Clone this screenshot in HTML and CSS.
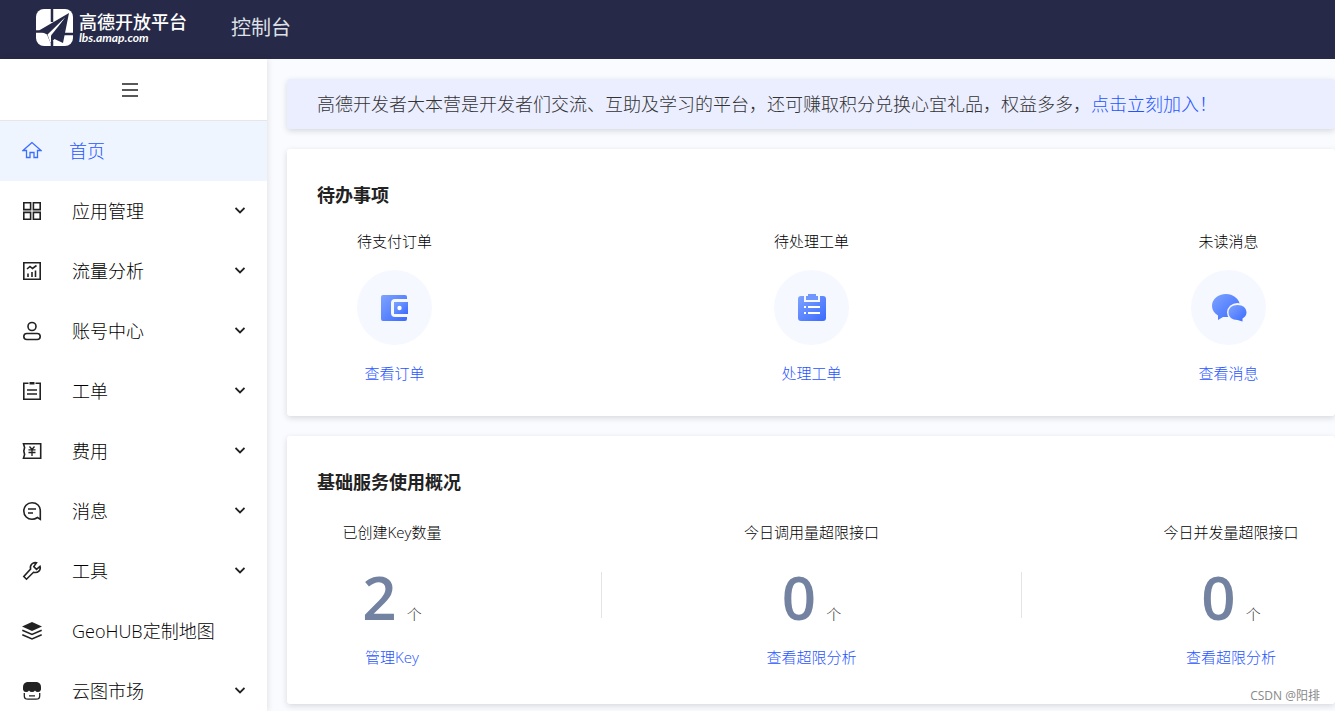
FILE: index.html
```html
<!DOCTYPE html>
<html lang="zh-CN">
<head>
<meta charset="utf-8">
<title>控制台</title>
<link rel="stylesheet" href="styles.css">
</head>
<body>
<header class="topbar">
  <a class="brand" href="#">
    <svg class="brand-mark" viewBox="0 0 37 37" aria-hidden="true">
      <rect width="37" height="37" rx="8" fill="#fff"/>
      <path d="M16 0V13M16 32V37M0 22.500H10M28 25H37" stroke="#262a48" stroke-width="2.500" fill="none"/>
      <path d="M33 4 3 21.500 11 25.500 14.500 34 18.500 30 27 34Z" fill="#262a48"/>
      <path d="M29 8.500 11.500 25.500 14.500 34 16.500 28Z" fill="#fff"/>
      <path d="M29 9 15 26.500 15 33 18.500 29Z" fill="#262a48"/>
    </svg>
    <span class="brand-text"><span class="brand-name">高德开放平台</span><span class="brand-url">lbs.amap.com</span></span>
  </a>
  <span class="topbar-title">控制台</span>
</header>
<div class="layout">
  <nav class="sidebar">
    <button class="toggle" type="button" aria-label="收起菜单">
      <svg class="icon-toggle" viewBox="0 0 16 16" aria-hidden="true"><path d="M0 2H16M0 8H16M0 14H16"/></svg>
    </button>
    <ul class="menu">
      <li><a class="item active" href="#">
        <svg class="icon thin" viewBox="0 0 20 20" aria-hidden="true"><path d="M10 1.500 1 9.500H4.500V16.500H8V11.500H12V16.500H15.500V9.500H19Z"/></svg>
        <span class="label">首页</span></a></li>
      <li><button class="item" type="button">
        <svg class="icon" viewBox="0 0 20 20" aria-hidden="true"><path d="M1.800 1.800H8.600V8.600H1.800ZM11.400 1.800H18.200V8.600H11.400ZM1.800 11.400H8.600V18.200H1.800ZM11.400 11.400H18.200V18.200H11.400Z"/></svg>
        <span class="label">应用管理</span><svg class="chevron" viewBox="0 0 10 8" aria-hidden="true"><path d="M.5 1 5 5.500 9.500 1"/></svg></button></li>
      <li><button class="item" type="button">
        <svg class="icon" viewBox="0 0 20 20" aria-hidden="true"><path d="M1.800 1.800H18.200V18.200H1.800ZM5 8 8 5.500 10.500 7.500 14.500 4.500M6 16V12.500M10 16V11M13.500 16V9.500"/></svg>
        <span class="label">流量分析</span><svg class="chevron" viewBox="0 0 10 8" aria-hidden="true"><path d="M.5 1 5 5.500 9.500 1"/></svg></button></li>
      <li><button class="item" type="button">
        <svg class="icon" viewBox="0 0 20 20" aria-hidden="true"><circle cx="10" cy="5.500" r="4"/><rect x="1.800" y="12.500" width="16.400" height="6" rx="3"/></svg>
        <span class="label">账号中心</span><svg class="chevron" viewBox="0 0 10 8" aria-hidden="true"><path d="M.5 1 5 5.500 9.500 1"/></svg></button></li>
      <li><button class="item" type="button">
        <svg class="icon" viewBox="0 0 20 20" aria-hidden="true"><path d="M6.500 2.300H1.800V18.200H18.200V2.300H13.500M5 9H15M5 13H15"/><path class="solid" d="M7.500 1H12.500V3.500H7.500Z"/></svg>
        <span class="label">工单</span><svg class="chevron" viewBox="0 0 10 8" aria-hidden="true"><path d="M.5 1 5 5.500 9.500 1"/></svg></button></li>
      <li><button class="item" type="button">
        <svg class="icon" viewBox="0 0 20 20" aria-hidden="true"><path d="M1.500 2.800H18.700V17.200H1.500L2.600 13.500 1.800 10 2.600 6.500Z"/><path class="fine" d="M7.500 5.500 10 8.500 12.500 5.500M6.500 8.800H13.500M6.500 11.500H13.500M10 8.500V15"/></svg>
        <span class="label">费用</span><svg class="chevron" viewBox="0 0 10 8" aria-hidden="true"><path d="M.5 1 5 5.500 9.500 1"/></svg></button></li>
      <li><button class="item" type="button">
        <svg class="icon" viewBox="0 0 20 20" aria-hidden="true"><path d="M18.300 18.300V10C18.300 5 15 1.800 10 1.800 5 1.800 1.800 5.500 1.800 10 1.800 15 5.500 18.300 10 18.300 12.500 18.300 14 17.500 15.500 16.500ZM6 8H14M6 12H11"/></svg>
        <span class="label">消息</span><svg class="chevron" viewBox="0 0 10 8" aria-hidden="true"><path d="M.5 1 5 5.500 9.500 1"/></svg></button></li>
      <li><button class="item" type="button">
        <svg class="icon" viewBox="0 0 20 20" aria-hidden="true"><path d="M14.500 1.800C11 .8 7.500 4 8.600 8L1.800 15.500 4.500 18.200 11.500 11.300C16 12.500 19.200 9 18 5.300L14.500 8.300 11.800 5.600Z"/></svg>
        <span class="label">工具</span><svg class="chevron" viewBox="0 0 10 8" aria-hidden="true"><path d="M.5 1 5 5.500 9.500 1"/></svg></button></li>
      <li><a class="item" href="#">
        <svg class="icon" viewBox="0 0 20 20" aria-hidden="true"><path class="solid" d="M10 1 20 5.500 10 10 0 5.500Z"/><path d="M.3 9.300 10 13.500 19.700 9.300M.3 13.800 10 18 19.700 13.800"/></svg>
        <span class="label">GeoHUB定制地图</span></a></li>
      <li><button class="item" type="button">
        <svg class="icon" viewBox="0 0 20 20" aria-hidden="true"><path class="solid" d="M5 1H15Q19 2 19 6V8.500Q18.500 11 16 11 14 11 13 9.500 12 11 10 11 8 11 7 9.500 6 11 4 11 1.500 11 1 8.500V6Q1 2 5 1Z"/><path class="fine" d="M2.300 12V15Q2.300 18.200 6 18.200H14Q17.700 18.200 17.700 15V12M7 14.800H13"/></svg>
        <span class="label">云图市场</span><svg class="chevron" viewBox="0 0 10 8" aria-hidden="true"><path d="M.5 1 5 5.500 9.500 1"/></svg></button></li>
    </ul>
  </nav>
  <main class="content">
    <svg class="defs" aria-hidden="true"><defs><linearGradient id="blue" x1="0" y1="0" x2="1" y2="1"><stop offset="0" stop-color="#7fa3ff"/><stop offset="1" stop-color="#3a6aff"/></linearGradient></defs></svg>
    <p class="banner">高德开发者大本营是开发者们交流、互助及学习的平台，还可赚取积分兑换心宜礼品，权益多多，<a href="#">点击立刻加入！</a></p>
    <section class="card">
      <h2>待办事项</h2>
      <div class="todos">
        <div class="todo"><span>待支付订单</span>
          <span class="disc"><svg viewBox="0 0 36 36" aria-hidden="true"><path fill="url(#blue)" d="M6 5H28Q30 5 30 7V9H18Q14 9 14 13V23Q14 27 18 27H30V29Q30 31 28 31H6Q4 31 4 29V7Q4 5 6 5Z"/><path fill="url(#blue)" d="M17 12H31V24H17Z"/><circle cx="22.500" cy="18" r="2.200" fill="#fff"/></svg></span>
          <a href="#">查看订单</a></div>
        <div class="todo"><span>待处理工单</span>
          <span class="disc"><svg viewBox="0 0 36 36" aria-hidden="true"><rect x="4" y="6" width="28" height="25" rx="3" fill="url(#blue)"/><path d="M10 5H26V12H10Z" fill="#f5f8ff"/><path d="M14 4H22V6H24V10H12V6H14Z" fill="#6f97ff"/><path d="M10 17H12M14 17H26M10 23H12M14 23H26" stroke="#fff" stroke-width="2"/></svg></span>
          <a href="#">处理工单</a></div>
        <div class="todo"><span>未读消息</span>
          <span class="disc"><svg viewBox="0 0 36 36" aria-hidden="true"><path fill="url(#blue)" d="M15 4C7 4 1 9 1 16 1 20 3 23 7 25.500V30L12 27H16C24 27 29 22 29 16S23 4 15 4Z"/><ellipse cx="26.500" cy="22.500" rx="10.500" ry="9.500" fill="#f5f8ff"/><path fill="url(#blue)" d="M26.500 15C21 15 17.500 18 17.500 22.500S21 30 26.500 30L31.500 31.500V28.500C34 27 35.500 25 35.500 22.500 35.500 18 32 15 26.500 15Z"/></svg></span>
          <a href="#">查看消息</a></div>
      </div>
    </section>
    <section class="card">
      <h2>基础服务使用概况</h2>
      <div class="stats">
        <div class="stat"><span>已创建Key数量</span><p class="figure"><strong>2</strong><span>个</span></p><a href="#">管理Key</a></div>
        <div class="divider"></div>
        <div class="stat"><span>今日调用量超限接口</span><p class="figure"><strong>0</strong><span>个</span></p><a href="#">查看超限分析</a></div>
        <div class="divider"></div>
        <div class="stat"><span>今日并发量超限接口</span><p class="figure"><strong>0</strong><span>个</span></p><a href="#">查看超限分析</a></div>
      </div>
    </section>
  </main>
</div>
<span class="watermark">CSDN @阳排</span>
</body>
</html>
```
FILE: styles.css
```css
* { box-sizing: border-box; }
body {
  margin: 0;
  height: 100vh;
  display: flex;
  flex-direction: column;
  overflow: hidden;
  position: relative;
  background: #fafbfe;
  color: #000;
  font: 300 15px/20px "Open Sans", "Noto Sans CJK SC", sans-serif;
}
a { color: #1f55ff; text-decoration: none; }
button { border: 0; background: none; font: inherit; color: inherit; cursor: pointer; }
p, h2, ul { margin: 0; padding: 0; }
ul { list-style: none; }

.topbar {
  flex: none;
  display: flex;
  align-items: center;
  height: 59px;
  padding: 0 36px 4px;
  gap: 44px;
  background: #262a48;
}
.brand { display: flex; gap: 6px; color: #fff; }
.brand-mark { width: 37px; height: 37px; }
.brand-text { display: flex; flex-direction: column; padding-top: 2px; }
.brand-name { font-size: 18px; line-height: 22px; font-weight: 500; }
.brand-url { font: italic 700 12px/10px Lato, sans-serif; }
.topbar-title { color: #dfe0e6; font-size: 20px; font-weight: 400; }

.layout { flex: 1; display: flex; min-height: 0; }
.sidebar { flex: none; width: 267px; background: #fff; box-shadow: 1px 0 6px rgba(0, 0, 0, 0.1); }
.toggle {
  display: flex;
  justify-content: center;
  align-items: center;
  width: 100%;
  height: 62px;
  padding: 0 8px 0 0;
  border-bottom: 1px solid #e6e6e8;
}
.icon-toggle { width: 16px; height: 16px; fill: none; stroke: #222; stroke-width: 1.5; }
.item {
  display: flex;
  align-items: center;
  width: 100%;
  height: 60px;
  padding: 0 22px;
  gap: 30px;
  color: #000;
  font-size: 18px;
  text-align: left;
}
.active { gap: 27px; background: #eef5ff; color: #1f55ff; }
.label { flex: 1; white-space: nowrap; }
.icon { flex: none; width: 20px; height: 20px; fill: none; stroke: #222; stroke-width: 1.6; }
.thin { stroke: #3d6dff; stroke-width: 1.3; }
.fine { stroke-width: 1.3; }
.solid { fill: #222; stroke: none; }
.chevron { flex: none; width: 10px; height: 8px; fill: none; stroke: #222; stroke-width: 1.8; }

.content { flex: 1; min-width: 0; padding: 20px 0 0 20px; }
.defs { position: absolute; width: 0; height: 0; }
.banner, .card { margin-bottom: 20px; border-radius: 3px; box-shadow: 0 2px 6px rgba(0, 0, 0, 0.14); }
.banner {
  padding: 0 30px;
  background: #ebeeff;
  color: #333;
  font-size: 18px;
  line-height: 50px;
  white-space: nowrap;
}
.card { padding: 33px 30px; background: #fff; }
h2 { color: #222; font-size: 18px; line-height: 26px; font-weight: 700; }
.todos { display: flex; justify-content: space-between; padding: 23px 39px 0 40px; }
.todo { display: flex; flex-direction: column; align-items: center; white-space: nowrap; }
.disc {
  display: grid;
  place-items: center;
  width: 75px;
  height: 75px;
  margin: 19px 0 18px;
  border-radius: 50%;
  background: #f5f8ff;
}
.disc svg { width: 36px; height: 36px; }
.stats { display: flex; justify-content: space-between; padding: 27px 6px 4px 7px; }
.stat { display: flex; flex-direction: column; align-items: center; width: 136px; white-space: nowrap; }
.figure { display: flex; align-items: baseline; gap: 10px; margin: 20px 0 15px; color: #333; }
.figure strong { color: #7482a1; font-size: 60px; line-height: 70px; font-weight: 600; }
.divider { width: 1px; height: 46px; margin-top: 50px; background: #e4e4e6; }
.watermark { position: absolute; right: 15px; bottom: 5px; color: #888; font-size: 12px; font-weight: 400; }
```
